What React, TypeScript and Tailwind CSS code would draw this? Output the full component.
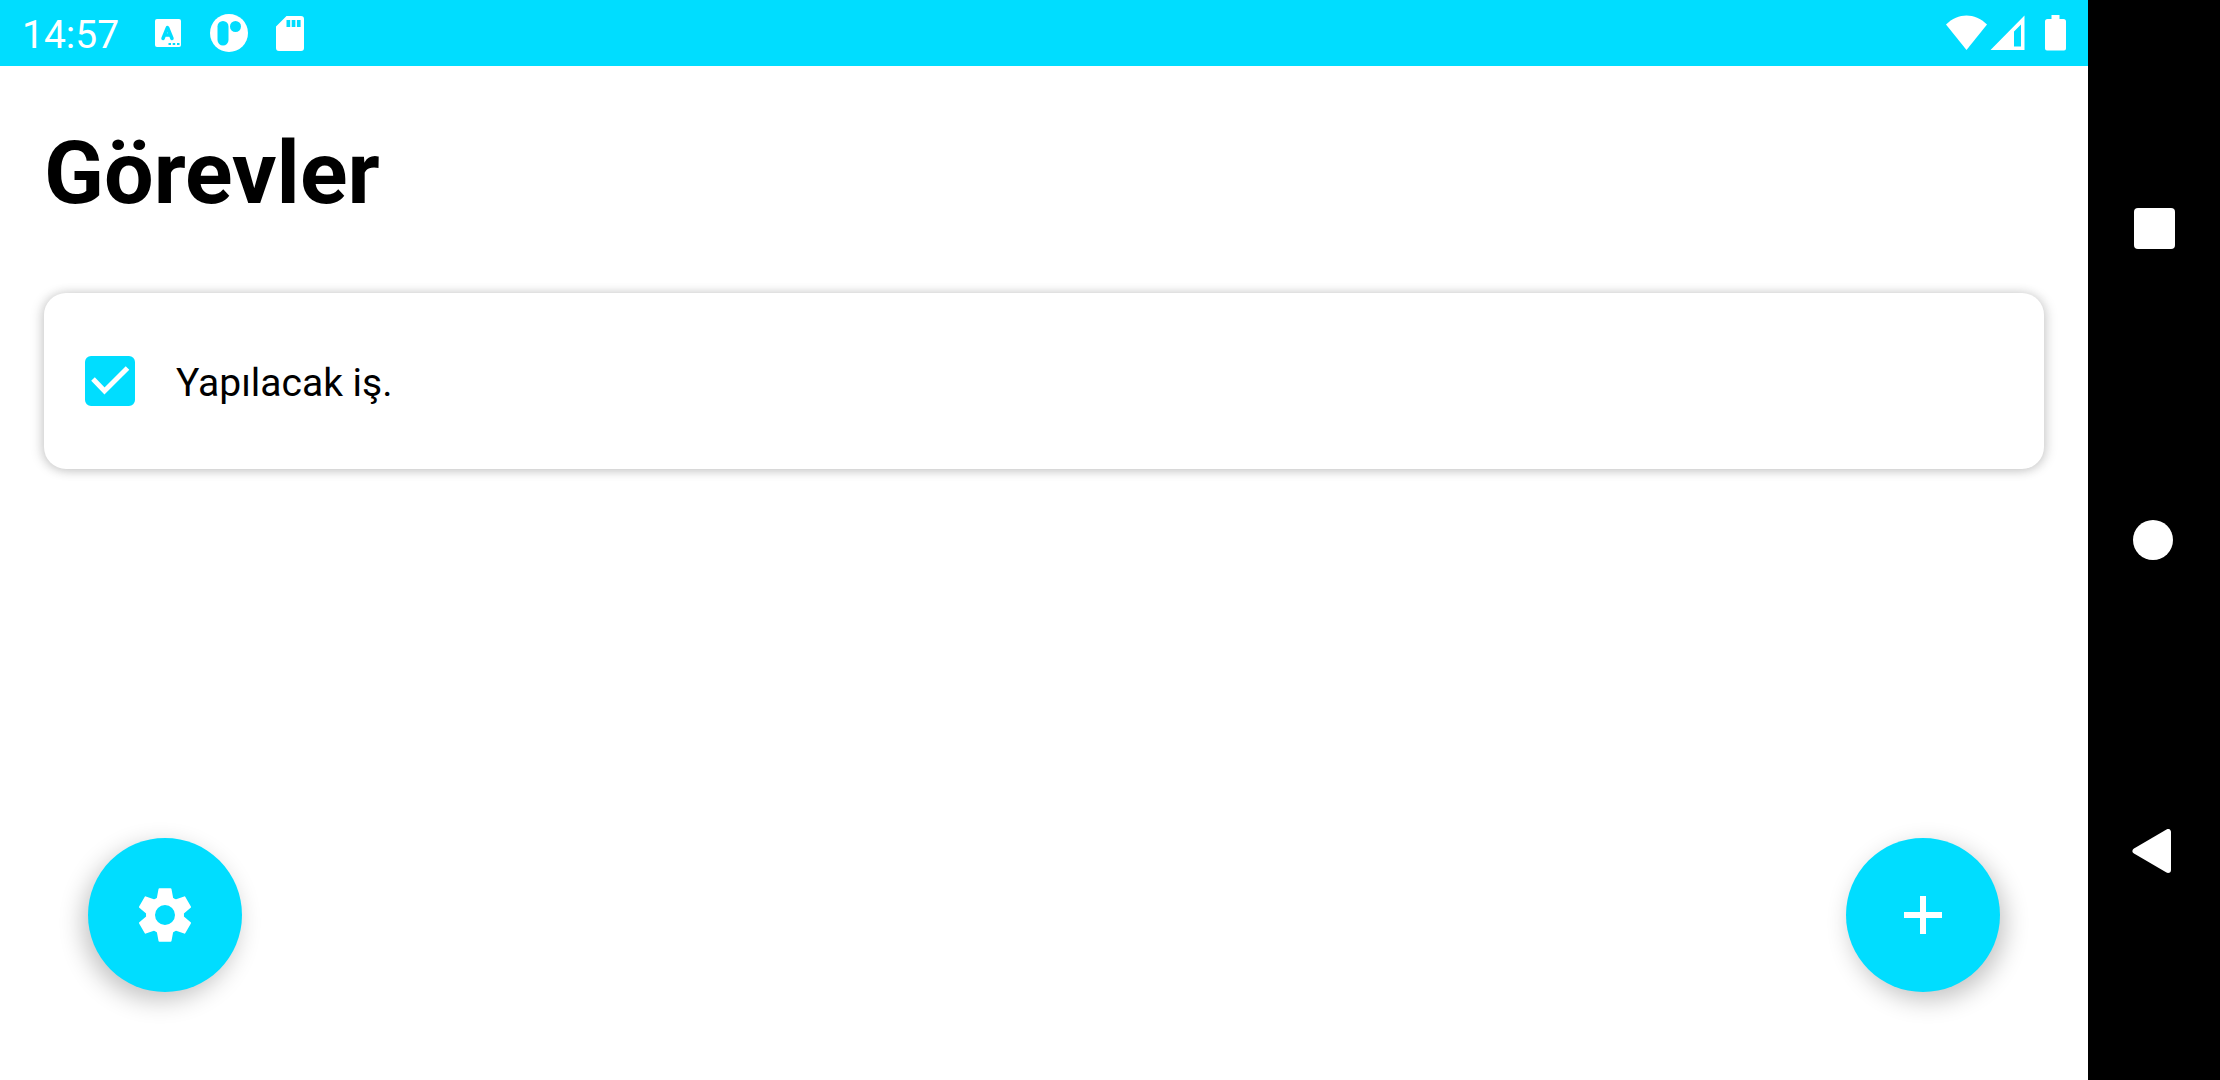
import React, { useState } from 'react';

const Wifi = () => (
  <svg className="w-[42px] h-9" viewBox="0 0 42 36" fill="currentColor" aria-hidden="true">
    <path d="M0 9.500C6 3.500 13.500 0.500 20.500 0.500s14.500 3 20.500 9L20.500 35z" />
  </svg>
);

const Signal = () => (
  <svg className="w-9 h-9" viewBox="0 0 36 36" fill="currentColor" aria-hidden="true">
    <path fillRule="evenodd" d="M0.500 35L34.500 0.500V35zM24 16.500v15h7V9.500z" />
  </svg>
);

const Battery = () => (
  <svg className="w-[21px] h-9" viewBox="0 0 21 36" fill="currentColor" aria-hidden="true">
    <path d="M6.500 0h8v4H18.500a2.500 2.500 0 0 1 2.500 2.500v27a2 2 0 0 1-2 2h-17a2 2 0 0 1-2-2v-27A2.500 2.500 0 0 1 2.500 4h4z" />
  </svg>
);

const Keyboard = () => (
  <svg className="w-[26px] h-7" viewBox="0 0 26 28" aria-hidden="true">
    <rect width="26" height="28" rx="2" fill="white" />
    <path d="M8 19.500L12.500 8.500L17 19.500M9.500 16h6" fill="none" stroke="#00ddff" strokeWidth="3.500" strokeLinejoin="round" strokeLinecap="round" />
    <path d="M13.500 25h2.500M17.700 25h2.500M22 25h2.500" stroke="#00ddff" strokeWidth="2" />
  </svg>
);

const Record = () => (
  <svg className="w-[38px] h-[38px]" viewBox="0 0 38 38" aria-hidden="true">
    <circle cx="19" cy="19" r="19" fill="white" />
    <rect x="7.500" y="7" width="11" height="24.500" rx="5.500" fill="#00ddff" />
    <circle cx="25.500" cy="12.500" r="5.500" fill="#00ddff" />
  </svg>
);

const SdCard = () => (
  <svg className="w-7 h-[35px]" viewBox="0 0 28 35" fill="currentColor" aria-hidden="true">
    <path fillRule="evenodd" d="M10.500 0H25a3 3 0 0 1 3 3v29a3 3 0 0 1-3 3H3a3 3 0 0 1-3-3V10.500zM10.500 4v7h3.700V4zM15.700 4v7h3.700V4zM20.900 4v7h3.700V4z" />
  </svg>
);

const Gear = () => (
  <svg className="size-[66px]" viewBox="-33 -33 66 66" fill="white" stroke="white" aria-hidden="true">
    <circle r="14.500" fill="none" strokeWidth="9" />
    {[0, 60, 120, 180, 240, 300].map((angle) => (
      <path key={angle} transform={`rotate(${angle})`} strokeWidth="2" strokeLinejoin="round" d="M-7.500 -15L-5.500 -25.700H5.500L7.500 -15z" />
    ))}
  </svg>
);

const StatusBar = () => (
  <header className="flex h-[66px] items-center justify-between bg-[#00ddff] px-[22px] text-white">
    <div className="flex items-center">
      <span className="w-[133px] pt-1 text-[39px] leading-[46px]">14:57</span>
      <Keyboard />
      <span className="ml-[29px]"><Record /></span>
      <span className="ml-7"><SdCard /></span>
    </div>
    <div className="flex items-center">
      <Wifi />
      <span className="ml-0.5"><Signal /></span>
      <span className="ml-[19px]"><Battery /></span>
    </div>
  </header>
);

const NavigationBar = () => (
  <nav className="flex w-[132px] shrink-0 flex-col bg-black py-[73px] text-white">
    <button type="button" aria-label="Son uygulamalar" className="flex flex-1 items-center justify-center">
      <svg className="h-11 w-11" viewBox="0 0 44 44" fill="currentColor">
        <rect x="2" y="1" width="41" height="41" rx="4" />
      </svg>
    </button>
    <button type="button" aria-label="Ana ekran" className="flex flex-1 items-center justify-center">
      <svg className="h-11 w-11" viewBox="0 0 44 44" fill="currentColor">
        <circle cx="21" cy="22" r="20" />
      </svg>
    </button>
    <button type="button" aria-label="Geri" className="flex flex-1 items-center justify-center">
      <svg className="h-11 w-11" viewBox="0 0 44 44" fill="currentColor" stroke="currentColor" strokeWidth="6" strokeLinejoin="round">
        <path d="M3.500 22L36 3V41z" />
      </svg>
    </button>
  </nav>
);

export default function App() {
  const [done, setDone] = useState(true);

  return (
    <div className="flex min-h-screen bg-white font-['Roboto',sans-serif]">
      <div className="flex flex-1 flex-col">
        <StatusBar />

        <main className="flex flex-1 flex-col px-11 pt-[55px]">
          <h1 className="text-[88px] font-bold leading-[104px] text-black">Görevler</h1>

          {/* Task card */}
          <label className="mt-[68px] flex h-44 items-center rounded-[22px] bg-white pl-[41px] shadow-[-3px_1px_12px_rgba(0,0,0,0.15),3px_1px_12px_rgba(0,0,0,0.15)]">
            <span className="grid">
              <input
                type="checkbox"
                checked={done}
                onChange={(e) => setDone(e.target.checked)}
                className="col-start-1 row-start-1 size-[50px] appearance-none rounded-[6px] border-[5px] border-gray-500 checked:border-[#00ddff] checked:bg-[#00ddff]"
              />
              {done && (
                <svg className="pointer-events-none col-start-1 row-start-1 size-[50px]" viewBox="0 0 50 50" fill="none" stroke="white" strokeWidth="5">
                  <path d="M8 23L19.500 35L42.500 12" />
                </svg>
              )}
            </span>
            <span className="ml-[41px] pt-1 text-[39px] leading-[46px] text-black">Yapılacak iş.</span>
          </label>

          {/* Floating buttons */}
          <div className="mt-auto flex justify-between px-11 pb-[88px]">
            <button type="button" aria-label="Ayarlar" className="flex size-[154px] items-center justify-center rounded-full bg-[#00ddff] shadow-[-5px_8px_24px_rgba(0,0,0,0.24)]">
              <Gear />
            </button>
            <button type="button" aria-label="Ekle" className="flex size-[154px] items-center justify-center rounded-full bg-[#00ddff] shadow-[5px_8px_24px_rgba(0,0,0,0.24)]">
              <svg className="size-[66px]" viewBox="0 0 66 66" fill="none" stroke="white" strokeWidth="6">
                <path d="M33 14v38M14 33h38" />
              </svg>
            </button>
          </div>
        </main>
      </div>
      <NavigationBar />
    </div>
  );
}
